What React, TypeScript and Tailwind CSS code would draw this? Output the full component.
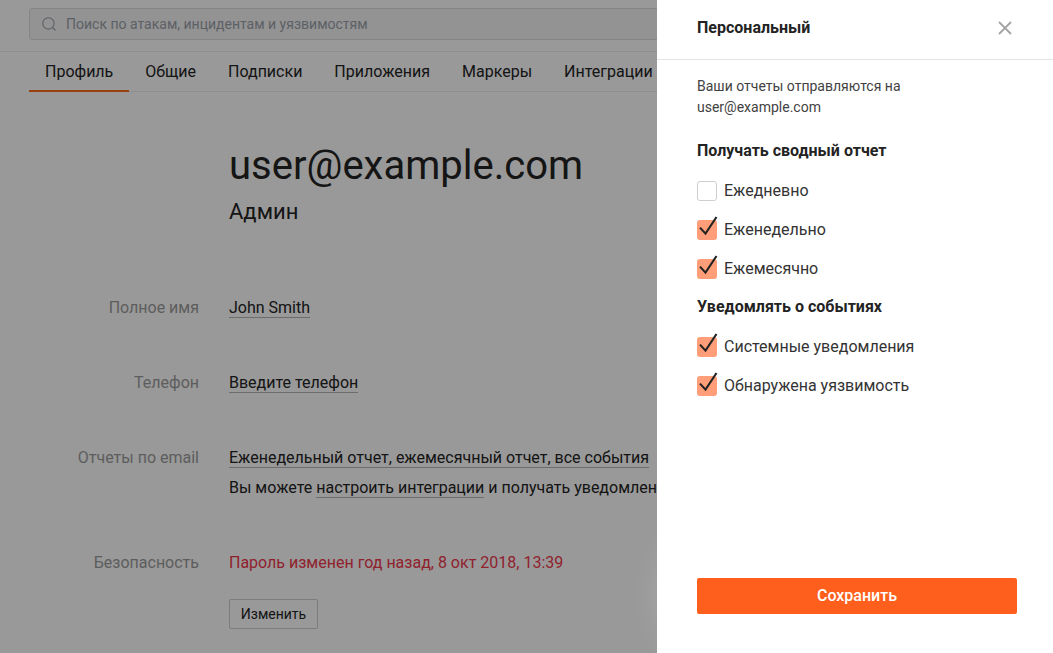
import type { ReactNode } from "react";

const tabs = ["Профиль", "Общие", "Подписки", "Приложения", "Маркеры", "Интеграции"];

function Editable({ children }: { children: ReactNode }) {
  return (
    <span className="inline-block h-5 border-b border-[#b4b4b4] leading-5">{children}</span>
  );
}

function Row({ label, height, children }: { label: string; height: string; children: ReactNode }) {
  return (
    <div className={`flex ${height} shrink-0 gap-[30px] text-base leading-[30px]`}>
      <div className="w-[199px] shrink-0 text-right text-[#9c9c9c]">{label}</div>
      <div className="whitespace-nowrap">{children}</div>
    </div>
  );
}

function CheckItem({ label, checked }: { label: string; checked: boolean }) {
  return (
    <label className="flex h-[39px] items-center gap-[7px] text-base leading-5 text-[#333]">
      {checked ? (
        <span className="size-5 rounded-[3px] bg-[#ff9e78]">
          <svg viewBox="0 0 20 20" className="size-5 overflow-visible" fill="none" stroke="#222" strokeWidth="2.1">
            <path d="M3 7.6 8.5 13.6 19.5 -3" />
          </svg>
        </span>
      ) : (
        <span className="size-5 rounded-[3px] border border-[#cfcfcf] bg-white" />
      )}
      <span>{label}</span>
    </label>
  );
}

export default function App() {
  return (
    <div className="relative h-[653px] w-[1053px] overflow-hidden bg-white font-['Roboto',sans-serif] text-[#232323]">
      <div className="flex h-full flex-col">
        <div className="h-[52px] shrink-0 border-b border-[#ededed] pt-2 pl-[29px]">
          <div className="flex h-8 items-center gap-[10px] rounded-[3px] border border-[#e0e0e0] bg-[#f5f5f5] pl-3 text-sm text-[#9ba1a9]">
            <svg viewBox="0 0 14 14" className="size-[14px]" fill="none" stroke="#9ba1a9" strokeWidth="1.1">
              <circle cx="6.4" cy="6.4" r="5.7" />
              <path d="M10.5 10.5 13.5 13.5" />
            </svg>
            <span>Поиск по атакам, инцидентам и уязвимостям</span>
          </div>
        </div>
        <nav className="ml-[29px] flex h-10 shrink-0 border-b border-[#ededed] text-base">
          {tabs.map((tab, i) => (
            <div
              key={tab}
              className={
                i === 0
                  ? "-mb-px h-10 border-b-2 border-[#ff6c1a] px-4 leading-10"
                  : "h-10 px-4 leading-10"
              }
            >
              {tab}
            </div>
          ))}
        </nav>
        <div className="shrink-0 pt-[50px] pl-[229px]">
          <h1 className="h-[48px] text-[40px] leading-[48px]">user@example.com</h1>
          <div className="mt-2 h-7 text-[22px] leading-7">Админ</div>
        </div>
        <div className="flex flex-col pt-[67px]">
          <Row label="Полное имя" height="h-[75px]"><Editable>John Smith</Editable></Row>
          <Row label="Телефон" height="h-[75px]"><Editable>Введите телефон</Editable></Row>
          <Row label="Отчеты по email" height="h-[105px]">
            <div className="h-[30px]"><Editable>Еженедельный отчет, ежемесячный отчет, все события</Editable></div>
            <div className="h-[30px]">Вы можете <Editable>настроить интеграции</Editable> и получать уведомления в них</div>
          </Row>
          <Row label="Безопасность" height="h-[90px]">
            <div className="text-[#f0384c]">Пароль изменен год назад, 8 окт 2018, 13:39</div>
            <button className="mt-[21px] block h-[30px] w-[89px] rounded-[2px] border border-[#cfcfcf] pb-px text-sm leading-[26px]">Изменить</button>
          </Row>
        </div>
      </div>

      <div className="absolute inset-0 flex justify-end bg-black/40">
        <aside className="flex w-[396px] flex-col bg-white">
          <header className="flex h-[60px] shrink-0 items-center justify-between border-b border-[#e4e4e4] pr-[41px] pb-1 pl-10">
            <h2 className="text-base font-bold">Персональный</h2>
            <svg viewBox="0 0 14 14" className="size-[14px]" fill="none" stroke="#a3a3a3" strokeWidth="1.8">
              <path d="M1 1 13 13 M13 1 1 13" />
            </svg>
          </header>
          <div className="flex grow flex-col px-10 pt-4">
            <p className="h-[42px] text-sm leading-[21px] text-[#424242]">
              Ваши отчеты отправляются на
              <br />
              user@example.com
            </p>
            <h3 className="mt-[21px] h-8 text-base leading-6 font-bold">Получать сводный отчет</h3>
            <CheckItem label="Ежедневно" checked={false} />
            <CheckItem label="Еженедельно" checked />
            <CheckItem label="Ежемесячно" checked />
            <h3 className="mt-[7px] h-8 text-base leading-6 font-bold">Уведомлять о событиях</h3>
            <CheckItem label="Системные уведомления" checked />
            <CheckItem label="Обнаружена уязвимость" checked />
          </div>
          <div className="shrink-0 px-10 pb-[39px]">
            <button className="block h-9 w-80 rounded-[2px] bg-[#ff5f1c] text-base font-medium text-white shadow-[0_0_50px_10px_#fff]">Сохранить</button>
          </div>
        </aside>
      </div>
    </div>
  );
}
